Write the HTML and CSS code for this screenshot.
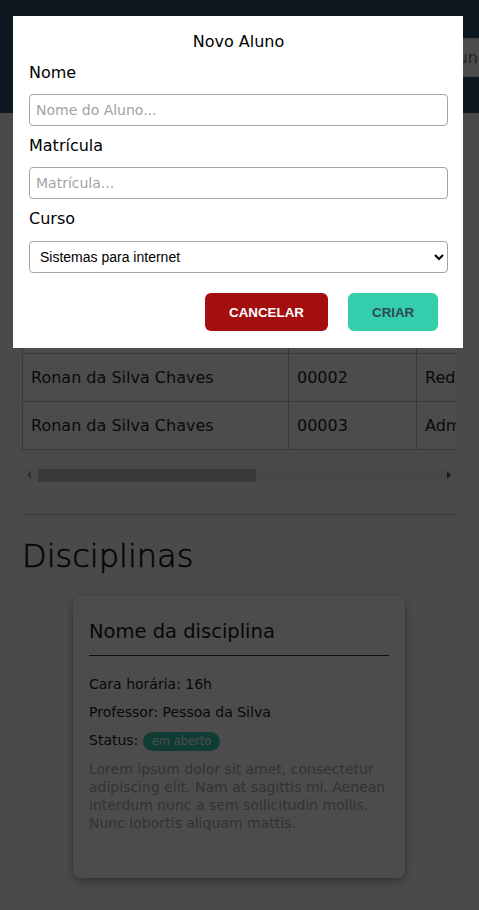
FILE: index.html
```html
<!DOCTYPE html>
<html lang="pt-BR">
<head>
<meta charset="utf-8">
<title>Alunos</title>
<link rel="stylesheet" href="styles.css">
</head>
<body>
<header class="topbar">
  <div class="brand">Escola</div>
  <input class="search" type="text" value="Buscar por aluno" readonly>
</header>
<main class="content">
  <h2 class="section-title">Alunos</h2>
  <div class="toolbar"><button class="btn-add">NOVO ALUNO</button></div>
  <div class="table-wrap">
    <table class="students">
      <thead>
        <tr><th class="c1">Nome</th><th class="c2">Matrícula</th><th class="c3">Curso</th><th class="c4">Ações</th></tr>
      </thead>
      <tbody>
        <tr><td>Ronan da Silva Chaves</td><td>00001</td><td>Sistemas para internet</td><td>Editar</td></tr>
        <tr><td>Ronan da Silva Chaves</td><td>00002</td><td>Redes de computadores</td><td>Editar</td></tr>
        <tr><td>Ronan da Silva Chaves</td><td>00003</td><td>Administração</td><td>Editar</td></tr>
      </tbody>
    </table>
  </div>
  <div class="hscroll" aria-hidden="true">
    <span class="hs-btn"><span class="tri tri-left"></span></span>
    <span class="hs-track"><span class="hs-thumb"></span></span>
    <span class="hs-btn"><span class="tri tri-right"></span></span>
  </div>
  <hr class="divider">
  <h2 class="section-title big">Disciplinas</h2>
  <div class="card">
    <h3 class="card-title">Nome da disciplina</h3>
    <p class="meta">Cara horária: 16h</p>
    <p class="meta">Professor: Pessoa da Silva</p>
    <p class="meta">Status: <span class="badge">em aberto</span></p>
    <p class="desc">Lorem ipsum dolor sit amet, consectetur adipiscing elit. Nam at sagittis mi. Aenean interdum nunc a sem sollicitudin mollis. Nunc lobortis aliquam mattis.</p>
  </div>
</main>

<div class="overlay">
  <div class="modal">
    <h4 class="modal-title">Novo Aluno</h4>
    <label class="field-label" for="nome">Nome</label>
    <input class="field" id="nome" type="text" placeholder="Nome do Aluno...">
    <label class="field-label" for="mat">Matrícula</label>
    <input class="field" id="mat" type="text" placeholder="Matrícula...">
    <label class="field-label" for="curso">Curso</label>
    <select class="field select" id="curso">
      <option>Sistemas para internet</option>
      <option>Redes de computadores</option>
      <option>Administração</option>
    </select>
    <div class="actions">
      <button class="btn btn-cancel">CANCELAR</button>
      <button class="btn btn-create">CRIAR</button>
    </div>
  </div>
</div>
</body>
</html>
```
FILE: styles.css
```css
* { box-sizing: border-box; }
html, body { margin: 0; padding: 0; }
body {
  font-family: "DejaVu Sans", "Noto Sans", sans-serif;
  background: #f8f8f8;
  color: #222;
  overflow-x: hidden;
  width: 479px;
}
.topbar {
  height: 113px;
  background: #334e6c;
  display: flex;
  align-items: flex-start;
  padding-top: 38px;
}
.brand {
  color: #334e6c;
  padding-left: 22px;
  width: 200px;
  flex-shrink: 0;
}
.search {
  flex-shrink: 0;
  margin-left: auto;
  margin-right: -120px;
  width: 300px;
  height: 39px;
  border: 1px solid #ddd;
  background: #fff;
  color: #777;
  font-family: "DejaVu Sans", sans-serif;
  font-size: 16px;
  padding: 0 12px;
  text-indent: 40px;
}
.content { padding: 0 23px 40px 22px; }
.section-title {
  margin: 24px 0 0;
  font-size: 32px;
  line-height: 40px;
  font-weight: 200;
  -webkit-text-stroke: 0.6px currentColor;
}
.toolbar { margin-top: 16px; height: 38px; }
.btn-add {
  height: 38px;
  border: 0;
  border-radius: 6px;
  background: #35cead;
  color: #2f4858;
  font-weight: bold;
  padding: 0 20px;
}
.table-wrap {
  margin-top: 26px;
  overflow: hidden;
}
.students {
  border-collapse: collapse;
  width: 816px;
  table-layout: fixed;
  background: #fff;
  font-size: 16px;
}
.students th, .students td {
  border: 1px solid #c2c2c2;
  padding: 12px 8px;
  line-height: 23px;
  text-align: left;
  white-space: nowrap;
  font-weight: normal;
  color: #1f1f1f;
}
.c1 { width: 266px; }
.c2 { width: 128px; }
.c3 { width: 250px; }
.c4 { width: 172px; }

.hscroll {
  margin-top: 17px;
  height: 15px;
  display: flex;
  background: #f1f1f1;
}
.hs-btn {
  width: 15px;
  flex-shrink: 0;
  display: flex;
  align-items: center;
  justify-content: center;
}
.tri { width: 0; height: 0; border-top: 4px solid transparent; border-bottom: 4px solid transparent; }
.tri-left { border-right: 4px solid #a3a3a3; margin-left: -1px; }
.tri-right { border-left: 4px solid #505050; margin-left: 1px; }
.hs-track { flex: 1; display: flex; padding-top: 2px; }
.hs-thumb {
  margin-left: 1px;
  width: 218px;
  height: 13px;
  background: #c1c1c1;
}

.divider {
  margin: 32px 0 0;
  border: 0;
  border-top: 1px solid #c4c4c4;
}
.section-title.big { margin-top: 17px; line-height: 48px; color: #111; }
.card {
  width: 332px;
  margin: 16px auto 0;
  background: #fff;
  border-radius: 8px;
  box-shadow: 0 3px 8px rgba(0,0,0,0.35);
  padding: 21px 16px 46px;
}
.card-title {
  margin: 0;
  font-size: 19.5px;
  line-height: 30px;
  font-weight: normal;
  padding-bottom: 8px;
  border-bottom: 1px solid #333;
  color: #1a1a1a;
}
.meta {
  margin: 8px 0 0;
  font-size: 14px;
  line-height: 20px;
  color: #1a1a1a;
}
.meta:first-of-type { margin-top: 18px; }
.badge {
  display: inline-block;
  background: #35cead;
  color: #fff;
  font-size: 11.5px;
  line-height: 19px;
  padding: 0 9px;
  border-radius: 10px;
  vertical-align: middle;
}
.desc {
  margin: 9px 0 0;
  font-size: 14px;
  line-height: 18px;
  color: #a9a9a9;
}

.overlay {
  position: fixed;
  inset: 0;
  background: rgba(0,0,0,0.7);
}
.modal {
  position: absolute;
  top: 16px;
  left: 13px;
  width: 450px;
  background: #fff;
  padding: 14px 15px 17px 16px;
  display: flex;
  flex-direction: column;
}
.modal-title {
  margin: 0;
  text-align: center;
  font-size: 16px;
  line-height: 24px;
  font-weight: normal;
  color: #000;
}
.field-label {
  margin-top: 7px;
  font-size: 16px;
  line-height: 24px;
  color: #000;
}
.field-label + .field { margin-top: 9px; }
.field-label:nth-of-type(n+2) { margin-top: 8px; }
.field {
  height: 32px;
  width: 100%;
  border: 1px solid #a5a5a5;
  border-radius: 4px;
  padding: 0 6px;
  font-family: "DejaVu Sans", sans-serif;
  font-size: 14px;
  color: #222;
  background: #fff;
}
.field::placeholder { color: #a3a3a3; }
.select {
  margin-top: 10px !important;
  font-family: "Liberation Sans", Arial, sans-serif;
  font-size: 14px;
  padding: 0 6px;
  color: #000;
}
.actions {
  margin-top: 20px;
  display: flex;
  justify-content: flex-end;
  gap: 20px;
  padding-right: 10px;
}
.btn {
  height: 38px;
  border: 0;
  border-radius: 6px;
  font-family: "Liberation Sans", Arial, sans-serif;
  font-size: 13.33px;
  font-weight: bold;
  padding: 0 24px;
}
.btn-cancel { background: #a30e0e; color: #fff; width: 123px; }
.btn-create { background: #35cead; color: #2f4858; width: 90px; }
```
